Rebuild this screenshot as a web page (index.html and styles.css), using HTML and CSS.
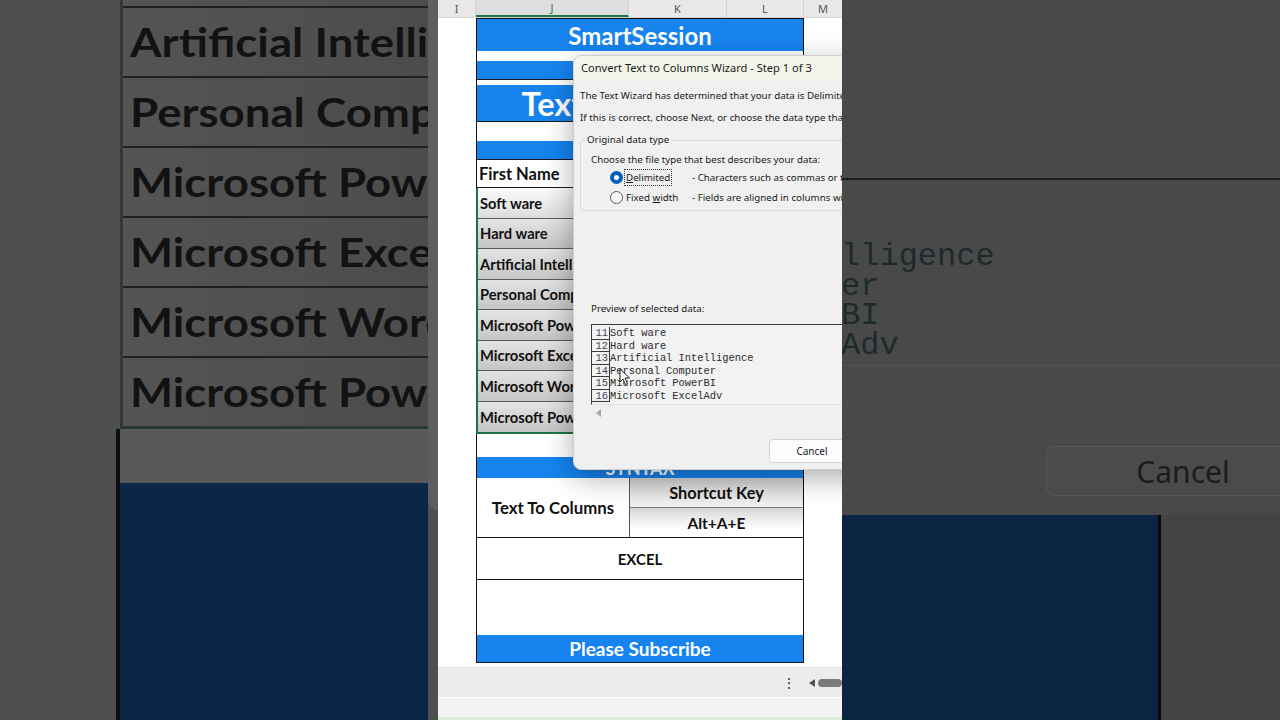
FILE: index.html
```html
<!DOCTYPE html>
<html>
<head>
  <meta charset="utf-8">
  <title>Text To Columns - SmartSession</title>
  <meta content="width=device-width, initial-scale=1" name="viewport">
  <link rel="stylesheet" href="styles.css">
</head>
<body>
  <div class="frame">

    <!-- Blurred backdrop, left -->
    <aside class="bg-left">
      <div class="gutter"></div>
      <div class="col">
        <div class="col-sel">
          <div class="stub"></div>
          <div class="big-row"><span>Artificial Intelligence</span></div>
          <div class="big-row"><span>Personal Computer</span></div>
          <div class="big-row"><span>Microsoft PowerBI</span></div>
          <div class="big-row"><span>Microsoft ExcelAdv</span></div>
          <div class="big-row"><span>Microsoft Word</span></div>
          <div class="big-row last"><span>Microsoft PowerPoint</span></div>
        </div>
        <div class="col-lower">
          <div class="lower-gray"></div>
          <div class="lower-blue"></div>
        </div>
      </div>
      <div class="edge"></div>
    </aside>

    <!-- The video frame -->
    <main class="video">
      <div class="heads">
        <span class="h-i">I</span>
        <span class="h-j">J</span>
        <span class="h-k">K</span>
        <span class="h-l">L</span>
        <span class="h-m">M</span>
      </div>

      <div class="sheet">
        <div class="table">
          <div class="band title">SmartSession</div>
          <div class="gap g10"></div>
          <div class="band thin"></div>
          <div class="gap g5"></div>
          <div class="band huge">Text To Columns</div>
          <div class="gap g19"></div>
          <div class="band thin"></div>
          <div class="head-row"><span>First Name</span></div>
          <div class="data">
            <div class="cell">Soft ware</div>
            <div class="cell">Hard ware</div>
            <div class="cell">Artificial Intelligence</div>
            <div class="cell">Personal Computer</div>
            <div class="cell">Microsoft PowerBI</div>
            <div class="cell">Microsoft ExcelAdv</div>
            <div class="cell">Microsoft Word</div>
            <div class="cell">Microsoft PowerPoint</div>
          </div>
          <div class="gap g23"></div>
          <div class="band syntax">SYNTAX</div>
          <div class="ttc">
            <div class="ttc-name">Text To Columns</div>
            <div class="ttc-keys">
              <div class="key-label">Shortcut Key</div>
              <div class="key-value">Alt+A+E</div>
            </div>
          </div>
          <div class="excel">EXCEL</div>
          <div class="gap g55"></div>
          <div class="band subscribe">Please Subscribe</div>
        </div>
      </div>

      <div class="bar1">
        <span class="dots">&#8942;</span>
        <span class="arrow-left"></span>
        <span class="thumb"></span>
      </div>
      <div class="bar2"></div>
      <div class="bar3"></div>

      <!-- Wizard dialog lies over the sheet -->
      <div class="wizard">
        <div class="wiz-title">Convert Text to Columns Wizard - Step 1 of 3</div>
        <div class="wiz-body">
          <p class="wiz-line">The Text Wizard has determined that your data is Delimited.</p>
          <p class="wiz-line">If this is correct, choose Next, or choose the data type that best describes your data.</p>
          <fieldset class="group">
            <legend>Original data type</legend>
            <div class="group-hint">Choose the file type that best describes your data:</div>
            <div class="radio-row">
              <span class="radio on"></span>
              <span class="radio-label"><span class="focus"><u>D</u>elimited</span></span>
              <span class="radio-desc">- Characters such as commas or tabs separate each field.</span>
            </div>
            <div class="radio-row">
              <span class="radio"></span>
              <span class="radio-label"><span class="plain">Fixed <u>w</u>idth</span></span>
              <span class="radio-desc">- Fields are aligned in columns with spaces between each field.</span>
            </div>
          </fieldset>
          <div class="preview-label">Preview of selected data:</div>
          <div class="preview">
            <div class="pv-row"><span class="pv-num">11</span><span class="pv-text">Soft ware</span></div>
            <div class="pv-row"><span class="pv-num">12</span><span class="pv-text">Hard ware</span></div>
            <div class="pv-row"><span class="pv-num">13</span><span class="pv-text">Artificial Intelligence</span></div>
            <div class="pv-row"><span class="pv-num">14</span><span class="pv-text">Personal Computer</span></div>
            <div class="pv-row"><span class="pv-num">15</span><span class="pv-text">Microsoft PowerBI</span></div>
            <div class="pv-row"><span class="pv-num">16</span><span class="pv-text">Microsoft ExcelAdv</span></div>
          </div>
          <div class="pv-scroll"><span class="pv-arrow"></span></div>
          <div class="wiz-buttons">
            <button class="wiz-btn">Cancel</button>
            <button class="wiz-btn">&lt; Back</button>
            <button class="wiz-btn">Next &gt;</button>
            <button class="wiz-btn">Finish</button>
          </div>
        </div>
      </div>

      <svg class="cursor" width="12" height="18" viewBox="0 0 12 18">
        <path d="M1 1 L1 14 L4 11 L6.5 16.5 L8.5 15.5 L6 10 L10.5 10 Z" fill="#fff" stroke="#222" stroke-width="1"/>
      </svg>
    </main>

    <!-- Blurred backdrop, right -->
    <aside class="bg-right">
      <div class="r-top"></div>
      <div class="r-preview">
        <div>Soft ware</div>
        <div>Hard ware</div>
        <div>Artificial Intelligence</div>
        <div>Personal Computer</div>
        <div>Microsoft PowerBI</div>
        <div>Microsoft ExcelAdv</div>
      </div>
      <div class="r-buttons">
        <div class="r-cancel">Cancel</div>
      </div>
      <div class="r-bottom">
        <div class="r-blue"></div>
        <div class="r-sep"></div>
        <div class="r-rest"></div>
      </div>
    </aside>

  </div>
</body>
</html>
```

FILE: styles.css
```css
/* Excel "Text To Columns" short, frame with blurred sides */
* {
  box-sizing: border-box;
}
body {
  margin: 0;
  width: 1280px;
  height: 720px;
  overflow: hidden;
  background: #4a4a4a;
  font-family: "Noto Sans", sans-serif;
}
.frame {
  display: flex;
  height: 720px;
}

/* ---------- left backdrop ---------- */
.bg-left {
  width: 438px;
  flex: none;
  display: flex;
  background: #4f4f4f;
  overflow: hidden;
}
.bg-left .gutter {
  width: 116px;
  flex: none;
}
.bg-left .col {
  width: 312px;
  flex: none;
  display: flex;
  flex-direction: column;
}
.bg-left .edge {
  width: 10px;
  height: 510px;
  flex: none;
  background: #5e5e5e;
  border-bottom-left-radius: 10px;
}
.col-sel {
  margin-left: 4px;
  border-left: 3px solid #2e3b31;
  border-bottom: 3px solid #2a3a2e;
  background: linear-gradient(to right, #545454, #4c4c4c);
}
.stub {
  height: 6px;
}
.big-row {
  height: 70px;
  border-top: 2px solid #1f1f1f;
  display: flex;
  align-items: center;
  padding-left: 7px;
  white-space: nowrap;
  overflow: hidden;
}
.big-row span {
  display: inline-block;
  font-family: Lato, sans-serif;
  font-weight: 700;
  font-size: 40px;
  color: #121212;
  transform: scaleX(1.14);
  transform-origin: left center;
}
.col-lower {
  flex: 1;
  display: flex;
  flex-direction: column;
  border-left: 4px solid #0e0e0e;
}
.lower-gray {
  height: 54px;
  background: #595959;
}
.lower-blue {
  flex: 1;
  background: #0b2747;
}

/* ---------- center video ---------- */
.video {
  width: 404px;
  flex: none;
  position: relative;
  overflow: hidden;
  background: #fff;
  display: flex;
  flex-direction: column;
}
.heads {
  display: flex;
  height: 18px;
  flex: none;
  background: #e8e8e8;
  border-bottom: 1px solid #d4d4d4;
  font-size: 11px;
  color: #555;
}
.heads span {
  display: flex;
  align-items: center;
  justify-content: center;
  border-right: 1px solid #d2d2d2;
}
.h-i { width: 38px; }
.h-j {
  width: 153px;
  background: #dedede;
  color: #2f7a4f;
  border-bottom: 2px solid #217346;
}
.h-k { width: 98px; }
.h-l { width: 77px; }
.h-m { width: 38px; border-right: 0 !important; }

.sheet {
  height: 649px;
  flex: none;
  padding-left: 38px;
  background: #fff;
}
.table {
  width: 328px;
  border: 1px solid #111;
  font-family: Lato, sans-serif;
  font-weight: 700;
  color: #111;
}
.band {
  background: #1683ee;
  color: #fff;
  display: flex;
  align-items: center;
  justify-content: center;
  white-space: nowrap;
  overflow: hidden;
}
.band.title {
  height: 32px;
  font-size: 24px;
}
.band.thin {
  height: 19px;
  border-bottom: 1px solid #1b1b1b;
}
.band.huge {
  height: 37px;
  font-size: 32.5px;
  border-bottom: 1px solid #1b1b1b;
}
.band.syntax {
  height: 21px;
  font-size: 18px;
}
.band.subscribe {
  height: 27px;
  font-size: 19px;
}
.gap { background: #fff; }
.g5 { height: 5px; }
.g10 { height: 10px; }
.g19 { height: 19px; }
.g23 { height: 23px; }
.g55 { height: 55px; }

.head-row {
  height: 28px;
  display: flex;
  align-items: center;
  padding-left: 2px;
  font-size: 16.5px;
  background: #fff;
  border-bottom: 1px solid #1b1b1b;
}
.data {
  margin-left: -1px;
  border-left: 2px solid #1f7245;
  border-bottom: 2px solid #1f7245;
}
.cell {
  height: 30.5px;
  display: flex;
  align-items: center;
  padding-left: 2px;
  font-size: 14.7px;
  white-space: nowrap;
  overflow: hidden;
  background: linear-gradient(to bottom, #e4e4e4, #c5c5c5);
  border-bottom: 1px solid #5a5a5a;
}
.cell:first-child {
  background: linear-gradient(to bottom, #fbfbfb, #dcdcdc);
}
.cell:last-child {
  border-bottom: 0;
}
.ttc {
  height: 60px;
  display: flex;
  border-bottom: 1px solid #1b1b1b;
}
.ttc-name {
  width: 153px;
  display: flex;
  align-items: center;
  justify-content: center;
  border-right: 1px solid #555;
  font-size: 16.8px;
}
.ttc-keys {
  flex: 1;
  display: flex;
  flex-direction: column;
}
.key-label,
.key-value {
  flex: 1;
  display: flex;
  align-items: center;
  justify-content: center;
}
.key-label {
  font-size: 16.4px;
  background: linear-gradient(to bottom, #d2d2d2, #f2f2f2);
  border-bottom: 1px solid #777;
}
.key-value {
  font-size: 15.5px;
  background: linear-gradient(to bottom, #d6d6d6, #ffffff 70%);
}
.excel {
  height: 42px;
  display: flex;
  align-items: center;
  justify-content: center;
  font-size: 15px;
  border-bottom: 1px solid #1b1b1b;
}

.bar1 {
  height: 30px;
  flex: none;
  display: flex;
  align-items: center;
  padding-left: 344px;
  background: #ececec;
  border-top: 1px solid #e2e2e2;
}
.dots {
  width: 10px;
  font-size: 14px;
  color: #333;
  text-align: center;
}
.arrow-left {
  margin-left: 17px;
  width: 0;
  height: 0;
  border-top: 4px solid transparent;
  border-bottom: 4px solid transparent;
  border-right: 6px solid #555;
}
.thumb {
  margin-left: 3px;
  width: 40px;
  height: 8px;
  border-radius: 4px;
  background: #7a7a7a;
}
.bar2 {
  height: 20px;
  flex: none;
  background: #f4f4f4;
  border-top: 1px solid #fbfbfb;
}
.bar3 {
  flex: 1;
  background: #dcefdc;
}

/* ---------- wizard dialog ---------- */
.wizard {
  position: absolute;
  left: 135px;
  top: 55px;
  width: 340px;
  height: 415px;
  background: #f0f0f0;
  border: 1px solid #cfcfcf;
  border-radius: 8px;
  overflow: hidden;
  box-shadow: 0 8px 28px rgba(0, 0, 0, 0.32);
  color: #1a1a1a;
  font-size: 9.75px;
}
.wiz-title {
  height: 25px;
  display: flex;
  align-items: center;
  padding: 0 0 3px 7px;
  background: #f3f5ea;
  font-size: 11.1px;
  white-space: nowrap;
}
.wiz-body {
  padding-left: 6px;
}
.wiz-line {
  margin: 8px 0 0;
  line-height: 14px;
  white-space: nowrap;
}
.group {
  margin: 8px 0 0;
  padding: 0 0 3px 10px;
  border: 1px solid #dadada;
  border-radius: 3px;
  min-width: 0;
}
.group legend {
  margin-left: -6px;
  padding: 0 2px;
  line-height: 14px;
}
.group-hint {
  margin-top: 6px;
  line-height: 14px;
  white-space: nowrap;
}
.radio-row {
  height: 20px;
  display: flex;
  align-items: center;
  white-space: nowrap;
}
.radio {
  margin-left: 19px;
  width: 13px;
  height: 13px;
  flex: none;
  border-radius: 50%;
  border: 1px solid #5a5a5a;
  background: #f7f7f7;
}
.radio.on {
  border: 4px solid #005fb8;
  background: #fff;
}
.radio-label {
  margin-left: 1px;
  width: 66px;
  flex: none;
}
.radio-label .focus,
.radio-label .plain {
  display: inline-block;
  padding: 1px 1px;
  border: 1px solid transparent;
}
.radio-label .focus {
  border: 1px dotted #333;
}
.radio-desc {
  margin-left: 2px;
}
.preview-label {
  margin: 91px 0 0 11px;
  line-height: 14px;
}
.preview {
  margin: 8px 0 0 11px;
  height: 81px;
  padding-top: 2px;
  border-top: 1px solid #3a3a3a;
  border-left: 1px solid #3a3a3a;
  border-bottom: 1px solid #e2e2e2;
  background: #f2f2f2;
  font-family: "Liberation Mono", monospace;
  font-size: 10.4px;
  color: #2c2c2c;
}
.pv-row {
  display: flex;
  height: 12.5px;
  line-height: 12.5px;
  white-space: pre;
}
.pv-num {
  width: 18px;
  flex: none;
  text-align: right;
  padding-right: 1px;
  border-right: 1px solid #3a3a3a;
  border-bottom: 1px solid #3a3a3a;
  color: #445;
}
.pv-scroll {
  height: 16px;
  display: flex;
  align-items: center;
  padding-left: 16px;
}
.pv-arrow {
  width: 0;
  height: 0;
  border-top: 4px solid transparent;
  border-bottom: 4px solid transparent;
  border-right: 5px solid #a8a8a8;
}
.wiz-buttons {
  margin-top: 18px;
  padding-left: 189px;
  display: flex;
  gap: 8px;
}
.wiz-btn {
  width: 86px;
  height: 24px;
  flex: none;
  background: #fdfdfd;
  border: 1px solid #d2d2d2;
  border-radius: 4px;
  font-family: "Noto Sans", sans-serif;
  font-size: 10px;
  color: #1a1a1a;
}
.cursor {
  position: absolute;
  left: 181px;
  top: 368px;
}

/* ---------- right backdrop ---------- */
.bg-right {
  width: 438px;
  flex: none;
  display: flex;
  flex-direction: column;
  background: #494949;
  overflow: hidden;
}
.r-top {
  height: 180px;
  flex: none;
  border-bottom: 2px solid #1d1d1d;
}
.r-preview {
  flex: none;
  padding: 3px 0 5px;
  border-bottom: 1px solid #545454;
  font-family: "Liberation Mono", monospace;
  font-size: 32px;
  line-height: 29.5px;
  color: #1c2a2c;
  white-space: nowrap;
}
.r-preview div {
  height: 29.5px;
  margin-left: -289px;
}
.r-buttons {
  flex: none;
  padding: 80px 0 0 204px;
}
.r-cancel {
  width: 274px;
  height: 50px;
  display: flex;
  align-items: center;
  justify-content: center;
  border: 1px solid #585858;
  border-radius: 9px;
  background: #4b4b4b;
  font-size: 30px;
  color: #1c1c1c;
}
.r-bottom {
  margin-top: 19px;
  flex: 1;
  display: flex;
}
.r-blue {
  width: 316px;
  background: #0b2441;
}
.r-sep {
  width: 3px;
  background: #0a0a0a;
}
.r-rest {
  flex: 1;
  background: #434343;
}
```
